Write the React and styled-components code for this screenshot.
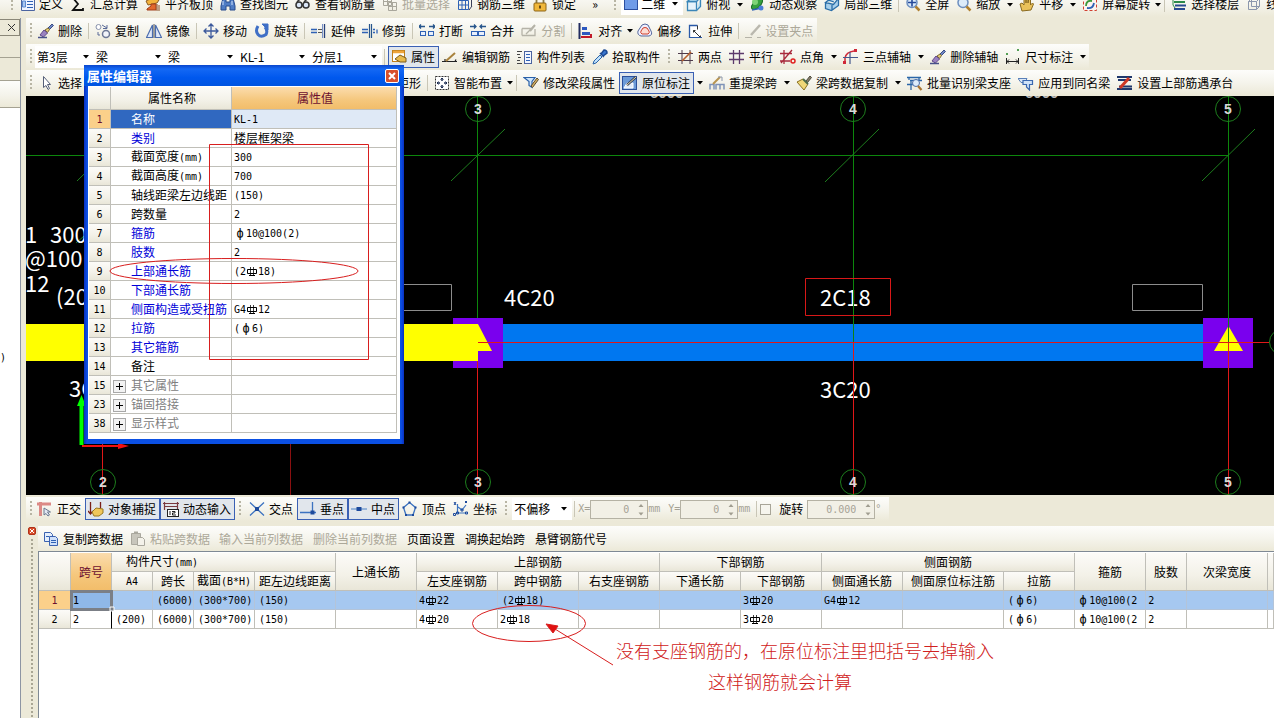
import React from "react";
import styled, { createGlobalStyle, css } from "styled-components";

const GlobalStyle = createGlobalStyle`
  * { box-sizing: border-box; }
  body {
    margin: 0;
    background: #fff;
    color: #000;
    font: 12px/16px "Noto Sans CJK SC", sans-serif;
    overflow: hidden;
  }
  button, input, select { font: inherit; color: inherit; margin: 0; }
`;

/* ---------- text helpers ---------- */

const Latin = styled.span`
  font-family: "DejaVu Sans Mono", monospace;
  font-size: 10px;
`;
const Wide = styled.span`
  display: inline-block;
  width: 12px;
  font-family: "DejaVu Sans Mono", monospace;
  font-size: 12px;
  line-height: 12px;
  text-align: center;
`;
const GradeSvg = styled.svg`
  display: inline-block;
  width: 12px;
  height: 11px;
  vertical-align: -2px;
`;
const Grade3 = () => (
  <GradeSvg viewBox="0 0 12 11" role="img" aria-label="三级钢" fill="none" stroke="currentColor">
    <path d="M1.500 3.500h9v4h-9zM3 9.500h6" />
    <path d="M4.500 1v8M7.500 1v8" strokeOpacity="0.750" />
  </GradeSvg>
);

/* "#" stands for the grade 3 rebar sign, "ф" is set in a full-width cell */
const Mixed = ({ children }) =>
  String(children)
    .split(/(#|ф|[\x20-\x22\x24-\x7e]+)/)
    .filter(Boolean)
    .map((run, i) => {
      if (run === "#") return <Grade3 key={i} />;
      if (run === "ф") return <Wide key={i}>ф</Wide>;
      if (/^[\x20-\x7e]+$/.test(run)) return <Latin key={i}>{run}</Latin>;
      return <React.Fragment key={i}>{run}</React.Fragment>;
    });

/* ---------- icons ---------- */

const B = "#2f62b5";
const P = ({ d, c = B, w = 1, f = "none" }) => <path d={d} stroke={c} strokeWidth={w} fill={f} />;
const brush = (
  <>
    <P d="M10 5l4-4 1.500 1.500-4 4z" c="#3c4f86" f="#6f86c4" />
    <P d="M7 7l3-2 1.500 1.500-2 3z" c="#7c6a30" f="#e0c878" />
    <P d="M2 12l4-5 3.500 3-4 4z" c="#60488a" f="#9a82c0" />
    <P d="M0 14.500h9" c="#48518a" w="1.500" />
  </>
);
const glass = (
  <>
    <circle cx="7" cy="6.500" r="5" fill="#dcebfa" stroke="#6d8fc0" strokeWidth="1.500" />
    <P d="M10.500 10.500l4 4" c="#b08030" w="2.500" />
  </>
);
const ICONS = {
  define: <><P d="M2.500 1.500h13v13h-13z" c="#4b64a0" f="#eef3ff" /><P d="M8 5.500h6M8 8.500h6M8 11.500h6" /><P d="M3.500 5h3v6h-3z" c="#5b8ad0" f="#a9c5ee" /></>,
  sum: <P d="M13 4V2H3l5 6-5 6h10v-2" c="#111" w="1.800" />,
  slab: <><P d="M1 5l6-3 7 2-2 3-9 2z" c="#8a5a20" f="#f3b33c" /><P d="M2 13l4-3v-2h5v6H2z" c="#a03c18" f="#e2682c" /><P d="M12 8v7M14 9v6" c="#8a4a20" /></>,
  find: <><P d="M3 2h3v4h4V2h3l2 8v4h-5v-4H6v4H1v-4z" c="#274a8c" f="#4f7cc4" /><P d="M3 5v4M12 5v4" c="#cfe0fb" /></>,
  view: <><circle cx="4" cy="9" r="3" fill="#dbe7f8" stroke="#333" strokeWidth="1.500" /><circle cx="11" cy="9" r="3" fill="#dbe7f8" stroke="#333" strokeWidth="1.500" /><P d="M7 9h1M2 6l3-3M9 6l4-4" c="#333" w="1.500" /></>,
  batch: <><P d="M1.500 1.500h8v8h-8zM1 5.500h8M5.500 2v8" c="#a9a79c" /><P d="M6.500 6.500h8v8h-8zM7 10.500h8M10.500 7v8" c="#a9a79c" /></>,
  bar3d: <><P d="M1.500 4.500h10v9h-10zM5 4v10M8.500 4v10M1 9h10" /><P d="M4.500 1.500h10v9M12 4l3-3M12 14l3-4" c="#3a3f58" /></>,
  lock: <><P d="M4.500 7V4q3.500-4 7 0v3" c="#8a7a48" w="1.800" /><rect x="2" y="7" width="12" height="8" rx="1" fill="#f0b73a" stroke="#8d6516" /><P d="M8 9.500v3" c="#6b4a10" w="2" /></>,
  square: <rect x="1.500" y="0.500" width="13" height="13" fill="#6f9be8" stroke="#2b4fa0" />,
  cube: <><P d="M1.500 5.500h9v9h-9z" f="#e6f3fb" c="#3b86b8" w="1.300" /><P d="M1.500 5.500l4-4h9l-4 4zM10.500 14.500l4-4v-9" c="#3b86b8" f="#bfe3f4" w="1.300" /></>,
  orbit: <><ellipse cx="8" cy="8" rx="7" ry="3.500" transform="rotate(-45 8 8)" fill="#36a03e" stroke="#1c6c28" /><circle cx="6" cy="6" r="3" fill="#7fd377" /><P d="M3 14l10-2" c={B} w="1.500" /><circle cx="12" cy="12" r="2.500" fill="#4b7ed8" /></>,
  part3d: <><P d="M1.500 6.500l5-4 7 1-4 5zM1.500 6.500v6l6 2 7-5v-6M8 8v6M4 4l6 2" c="#2b6ea8" f="#a8d0ec" w="1.300" /></>,
  fit: <>{glass}<P d="M7 2.500v8M3 6.500h8" c="#274a9a" w="1.600" /></>,
  zoom: glass,
  hand: <P d="M3 15l-2-7 2-1 2 2V3l2-1v5-6h2v6l1-5 1.500 1v6l2-2 1 1-2.500 6z" c="#8a6a20" f="#e9c15a" />,
  spin: <><rect x="1.500" y="1.500" width="13" height="13" fill="#fdf3ee" stroke="#d04030" strokeDasharray="3 2" /><P d="M4 10q0-6 6-5" c="#3c9a3c" w="1.800" /><P d="M5 12q6 1 7-5" c={B} w="1.800" /></>,
  floors: <><P d="M4 3l10-1M3 6h11" c="#2c8a4a" w="2" /><P d="M4 9.500h11M3 13h11" c="#284a90" w="2" /><P d="M2 1v8l2 3" c="#2c8a4a" /></>,
  wire: <><P d="M2.500 5.500h8v8h-8zM5.500 2.500h8v8h-8z" c="#8c97ad" /><P d="M2.500 5.500l3-3M10.500 5.500l3-3M10.500 13.500l3-3" c="#8c97ad" /></>,
  erase: brush,
  copy2: <><circle cx="3.500" cy="4" r="2.500" fill="#fff" stroke="#8791ab" /><circle cx="11" cy="11" r="3.500" fill="#f2f4fa" stroke="#6e7896" strokeWidth="1.500" /><P d="M7 2l5 3M12 2v3.500H8M3 9v3h2" c="#5a6a98" /></>,
  mirror: <><P d="M6.500 2v12.500h-6zM9.500 2v12.500h6z" c="#4a6cae" f="#dfe8f8" w="1.200" /><P d="M8 1v14" c="#555" /></>,
  move: <P d="M8 1v14M1 8h14M5.500 3.500L8 1l2.500 2.500M5.500 12.500L8 15l2.500-2.500M3.500 5.500L1 8l2.500 2.500M12.500 5.500L15 8l-2.500 2.500" c="#3d5a9c" w="1.300" />,
  rotate: <><P d="M4 3Q1 8 4 11.500t8 0q2-4-1-7.500" c="#3f6fc6" w="3" /><P d="M8 1h6v6z" c="#3f6fc6" f="#3f6fc6" /></>,
  extend: <><P d="M0 6.500h6M0 9.500h6" w="1.300" /><P d="M7 6.500h4M7 9.500h4" c="#555" /><P d="M13.500 1v14" c="#27407c" w="1.300" /><P d="M11.500 1v14" c="#7a92c8" /></>,
  trim: <><P d="M0 6.500h6M0 9.500h6M11 6.500h2M11 9.500h2M15 6.500v4" w="1.300" /><P d="M7.500 1v14M9.500 1v14" c="#27558c" w="1.200" /></>,
  brk: <><P d="M0 3.500h6M10 3.500h6M2 1.500L0 3.500l2 2M14 1.500l2 2-2 2" c="#27558c" w="1.300" /><rect x="1.500" y="8.500" width="5" height="4" fill="#e8effc" stroke={B} /><rect x="9.500" y="8.500" width="5" height="4" fill="#e8effc" stroke={B} /></>,
  join: <><P d="M0 3.500h6M10 3.500h6M4 1.500l2 2-2 2M12 1.500l-2 2 2 2" c="#27558c" w="1.300" /><rect x="1.500" y="8.500" width="6" height="4" fill="#e8effc" stroke={B} /><rect x="8.500" y="8.500" width="6" height="4" fill="#e8effc" stroke={B} /></>,
  split: <><P d="M1 5.500h9M1 12.500h13V6M1 5.500v7M5 11l8-8" c="#b5b3a8" w="1.300" /><P d="M9 8l5-6" c="#b5b3a8" w="2" /></>,
  align: <><P d="M1.500 0v16" c="#222c60" w="2" /><rect x="4" y="4" width="5" height="3" fill="#2d58c0" /><rect x="4" y="9" width="8" height="3" fill="#2d58c0" /><P d="M3 14h10v-3" c="#c01828" w="2" /></>,
  offset: <><P d="M4 13q-4-1-3-5l4-6q3-2 6 0l3 6q2 4-2 5z" c="#54689c" f="#eef" /><P d="M5 11q-2-1-1-3l2-3q2-1 4 0l2 3q1 2-1 3z" c="#d0402c" f="#fbdcd4" /></>,
  stretch: <><P d="M1.500 2.500h9l4 12h-13z" c="none" f="#fff" /><P d="M1.500 15V2.500h8" c="#2a5aa8" w="1.300" /><P d="M9.500 2.500v4M5.500 7.500l7 7M7.500 7.500h-2v2M12.500 12.500v2h-2" c="#333" /><P d="M2 14.500h12" c="#2a5aa8" /></>,
  grip: <><P d="M0 14.500h7M12 14.500h4" c="#b5b3a8" /><P d="M6 12l9-10" c="#bab8ae" w="2.500" /></>,
  props: <><rect x="1.500" y="1.500" width="12" height="11" fill="#fff" stroke="#c0801c" /><P d="M2 3h11" c="#eea43a" w="2.500" /><P d="M4 10l5-4 6 3v4H9z" c="#7a5a1c" f="#e8b94a" /></>,
  editbar: <><P d="M0 12.500h15M3 10v3M13 12.500l1-2" c="#222" w="1.200" /><P d="M4 12l9-8" c="#a8823c" w="2" /></>,
  list: <><rect x="7.500" y="2.500" width="7" height="12" fill="#f2f6ff" stroke="#4b64a0" /><P d="M9 5.500h4M9 8.500h4M9 11.500h4" /><P d="M0 2.500h5M0 5.500h3M1 8.500h3M0 11.500h3M0 14.500h5" c="#444" /></>,
  pick: <><P d="M1 15l1-3 6-6 2 2-6 6z" c="#2a64a8" f="#bfe0fa" /><P d="M8 4l4 4M9 5l3-4q3 0 3 3l-4 3z" c="#1d4a94" f="#3b78d0" w="1.500" /></>,
  pts2: <><P d="M4 1v14M12 1v14M0 4.500h15M0 11.500h15" c="#4d3a4a" /><P d="M4 12l9-9" c="#b8602c" w="1.600" /></>,
  para: <P d="M4.500 1v14M10.500 1v14M0 4.500h15M0 10.500h15" c="#5c3a6c" w="1.300" />,
  ptang: <><P d="M4 1v14M0 4.500h12M0 12h10M1 14L12 1" c="#a82a3c" w="1.300" /><circle cx="13" cy="12" r="2" fill="none" stroke="#e02020" strokeWidth="1.500" /></>,
  arc3: <><P d="M2 14V9q1-6 9-7" c="#d02838" w="1.500" /><P d="M7 3v12M0 8.500h15" c="#43588c" w="1.200" /><rect x="11" y="0" width="3" height="3" fill="#d02838" /><rect x="0" y="12" width="3" height="3" fill="#d02838" /></>,
  dim: <><rect x="1" y="4" width="2" height="2" fill="#55a055" /><rect x="12" y="0" width="2" height="2" fill="#55a055" /><P d="M1.500 9v6M13.500 9v6M2 12.500h11M4 10.500l-2 2 2 2M11 10.500l2 2-2 2" c="#222" /></>,
  arrow: <P d="M5.500 1.500v11l2.500-2 2 4 1.500-1-2-4h3z" c="#555f78" f="#fff" />,
  smart: <><rect x="1.500" y="1.500" width="13" height="13" fill="#fff" stroke="#333" strokeDasharray="2 1" /><P d="M8 3v3M8 10v3M3 8h3M10 8h3" c="#1c2c50" w="1.500" /><P d="M6.500 4.500L8 3l1.500 1.500M6.500 11.500L8 13l1.500-1.500M4.500 6.500L3 8l1.500 1.500M11.500 6.500L13 8l-1.500 1.500" c="#1c2c50" /></>,
  modify: <><P d="M1 2.500h11l-3 4v6l-3-2V6.500z" c="#2a60a8" f="#cfe6fb" w="1.200" /><P d="M8 11l6-8 1.500 1.500-6 8z" c="#5a4a30" f="#d4b060" /></>,
  insitu: <><rect x="0.500" y="1.500" width="14" height="13" fill="#6c9ad8" stroke="#2b4f9a" /><P d="M2 13l3-5h6v5z" c="#fff" f="#dfeafa" /><P d="M5 10l9-8" c="#33415e" w="2.500" /><P d="M5 10l9-8" c="#e9d8a0" /></>,
  span: <><P d="M1 14.500V9.500h4v5M7 14.500V9.500h4v5M11 9.500h4v5" c="#7f93b8" w="1.500" /><P d="M4 9l7-7" c="#b89450" w="2" /><P d="M9 2h4v4" c="#8d97aa" /></>,
  broom: <><P d="M10 6l4-5 1.500 1.500-4 5z" c="#4d4a40" f="#88806a" /><P d="M1 7l6-3 5 5-4 6z" c="#8a7020" f="#f0d878" /><P d="M7 4l5 5" c="#4d6c4a" w="2" /></>,
  detect: <><P d="M0 2.500h14M3 5.500h12M2 2v3M12 2v3M0 9.500h6M4 6v9" c="#2a66a8" w="1.300" /><circle cx="9" cy="8" r="3.500" fill="#dcecfb" stroke="#4a6ca8" /><P d="M11 11l3.500 4" c="#a87430" w="2.200" /></>,
  apply: <><P d="M0 3.500h9l-2 4H3z" c="#5a80b8" f="#dce9f8" /><P d="M5 5.500h9.500v4h-3v5.500l-3-3v-2.500H5z" c="#3a68b0" f="#cfe2f8" w="1.200" /></>,
  cap: <><P d="M0 2h15M0 14h15M1 5h13M2 11.500h13" c="#20386c" w="2" /><P d="M3 13L12 3" c="#d03824" w="3" /></>,
  ortho: <><P d="M0 3h14M3.500 1v14" c="#dc8a86" w="3" /><P d="M7 7v7l2-1.500 2 2.500 1.500-1-2-3h3z" c="#6a7890" f="#e4eaf4" /></>,
  snap: <><P d="M2.500 1v12M0 10l2.500 3L5 10M12.500 1v8" c="#7a2018" w="1.300" /><P d="M4 11l4-4 7 1v4l-4 3H6z" c="#9a7820" f="#f1c75a" /></>,
  dyn: <><P d="M0 2.500h16M1.500 1v8M14.500 1v8M1 5.500h14" c="#7a3a40" w="1.200" /><rect x="4.500" y="8.500" width="11" height="7" fill="#fff" stroke="#222" /><P d="M7 10v4M9 10.500h3v1.500H9.500v2H13" c="#222" /></>,
  cross: <><P d="M1 1.500l14 13M15 1.500l-14 13" c="#3b72c0" w="1.300" /><rect x="6" y="6" width="4" height="4" fill="#1d4a9c" /></>,
  perp: <><P d="M0 11.500h16M12.500 1v10" c="#3b72c0" w="1.300" /><rect x="10.500" y="9.500" width="4" height="4" fill="#1d4a9c" /></>,
  mid: <><P d="M0 8h16" c="#6f9ad0" w="1.300" /><rect x="5.500" y="6" width="5" height="4" fill="#1d4a9c" /></>,
  vertex: <><P d="M7.500 1.500l6 5-2.500 7.500H4L1.500 6.500z" c="#3b72c0" w="1.300" /><P d="M6.500 1.500h2M0.500 6.500h2M12.500 6.500h2M3 14h2M10 14h2" c="#1d4a9c" w="2" /></>,
  coord: <><P d="M4.500 3v9h9M5 6l4 3 4-5" c="#3b72c0" w="1.200" /><P d="M1 1l2 3M3 1L1 4M12 0l2 2M14 0l-2 2M0.500 12.500h2v2h-2zM3.500 11h2v2h-2zM8 8h2v2H8zM12.500 11h2v2h-2z" c="#1d4a9c" /></>,
  copy: <><P d="M1.500 1.500h6l2 2v7h-8z" c="#3b62b0" f="#e4eefc" /><P d="M6.500 5.500h6l2 2v7h-8z" c="#3b62b0" f="#cfe0fa" /><P d="M8 9.500h5M8 11.500h5M3 5.500h3" /></>,
  paste: <><P d="M1.500 2.500h9v11h-9z" c="#aaa89e" f="#c8c6bc" /><P d="M7.500 6.500h5l2 2v6h-7z" c="#aaa89e" f="#f4f2ea" /><P d="M4 1.500h4" c="#aaa89e" w="2" /></>,
};
const IconSvg = styled.svg`
  flex: none;
  width: 16px;
  height: 16px;
`;
const Icon = ({ name }) => <IconSvg viewBox="0 0 16 16" aria-hidden="true">{ICONS[name]}</IconSvg>;

/* ---------- toolbars ---------- */

const strip = "linear-gradient(#fdfdfb, #f5f4ec 50%, #ece9d8)";

const ToolRow = styled.div`
  display: flex;
  height: 26px;
  padding-bottom: 1px;
  background: #ece9d8;
`;
const TopRow = styled(ToolRow)`
  height: 27px;
  margin-top: -9px;
`;
const Strip = styled.div`
  display: flex;
  align-items: center;
  flex: ${(p) => (p.$grow ? "1" : "none")};
  padding-right: ${(p) => (p.$end ? "4px" : "0")};
  background: ${strip};
  white-space: nowrap;
`;
const ToolButton = styled.button`
  display: flex;
  flex: none;
  align-items: center;
  gap: 4px;
  height: 22px;
  padding: ${(p) => (p.$plain ? "0 5px" : "0 4px 0 3px")};
  border: 0;
  background: ${(p) => (p.$active ? "#e1e6ec" : "none")};
  box-shadow: ${(p) => (p.$active ? "inset 0 0 0 1px #3a60b4" : "none")};
  color: ${(p) => (p.disabled ? "#aca899" : "#000")};
  line-height: 16px;
  white-space: nowrap;
`;
const CaretButton = styled.button`
  flex: none;
  width: ${(p) => (p.$near ? "8px" : "12px")};
  height: 22px;
  padding: 0;
  border: 0;
  background: none;
  line-height: 0;
`;
const Sep = styled.span`
  flex: none;
  width: 4px;
  height: 16px;
  margin-left: 2px;
  border-left: 1px solid #c9c6b6;
`;
const Grip = styled.span`
  flex: none;
  width: ${(p) => (p.$w ? p.$w : 11)}px;
  height: 16px;
  background: radial-gradient(circle at 1px 1px, #b8b5a4 1px, transparent 1px) 4px 0 / 12px 4px repeat-y;
`;
const Gap = styled.span`
  flex: none;
  width: ${(p) => p.$w}px;
  text-align: center;
`;
const Caret = () => (
  <svg width="6" height="4" viewBox="0 0 6 4" aria-hidden="true"><path d="M0 0h6L3 3.500z" fill="#000" /></svg>
);
const Tool = ({ icon, label, active, disabled, caret }) => (
  <>
    <ToolButton type="button" $active={active} disabled={disabled}>
      <Icon name={icon} />
      {label}
    </ToolButton>
    {caret && (
      <CaretButton type="button" $near={caret === "near"} aria-label={label + "选项"}>
        <Caret />
      </CaretButton>
    )}
  </>
);
const ComboBox = styled.span`
  display: flex;
  flex: none;
  align-items: center;
  gap: 2px;
  width: ${(p) => p.$w}px;
  height: 22px;
  padding-right: 5px;
  padding-left: 2px;
  background: #fff;
  select {
    flex: 1;
    min-width: 0;
    padding: 0;
    border: 0;
    appearance: none;
    background: none;
  }
`;
const Combo = ({ w, value, label, icon }) => (
  <ComboBox $w={w}>
    {icon && <Icon name={icon} />}
    <select aria-label={label} defaultValue={value}><option>{value}</option></select>
    <Caret />
  </ComboBox>
);

/* ---------- frame ---------- */

const Page = styled.div`
  position: relative;
  display: flex;
  flex-direction: column;
  height: 100vh;
  overflow: hidden;
  background: #ece9d8;
`;
const Body = styled.div`
  display: flex;
  flex: 1;
  min-height: 0;
`;
const Side = styled.aside`
  display: flex;
  flex: none;
  flex-direction: column;
  width: 21px;
  margin-right: 5px;
  border-right: 1px solid #8d95a3;
  overflow: hidden;
`;
const SideHead = styled.div`
  display: flex;
  justify-content: flex-end;
  height: 17px;
  margin-top: 1px;
  border: 1px solid #8a8778;
  border-left: 0;
  button {
    width: 15px;
    padding: 0;
    border: 0;
    background: none;
    line-height: 0;
  }
`;
const SideTab = styled.div`
  height: ${(p) => p.$h}px;
  border-bottom: 1px solid #a5a292;
  background: ${(p) => (p.$light ? strip : "none")};
`;
const SideTree = styled.div`
  flex: 1;
  padding-top: 240px;
  background: #fff;
`;
const Main = styled.main`
  display: flex;
  flex: 1;
  flex-direction: column;
  min-width: 0;
`;

/* ---------- drawing area ---------- */

const Drawing = styled.svg`
  display: block;
  flex: none;
  width: 100%;
  height: 399px;
  background: #000;
  fill: none;
  text {
    fill: #fff;
    font: 22px "Noto Sans CJK SC", sans-serif;
  }
  .axis { font: bold 14px "Liberation Sans", sans-serif; fill: #d8d8d8; text-anchor: middle; }
  .span { font: bold 15px "Liberation Sans", sans-serif; fill: #b8b8b8; }
`;
const Bubble = ({ x, y, n }) => (
  <>
    <circle cx={x} cy={y} r="12.500" stroke="#1d7d1d" />
    <text className="axis" x={x} y={y + 5}>{n}</text>
  </>
);
const Canvas = () => (
  <Drawing role="img" aria-label="梁平面图">
    <g transform="translate(-26 -96)">
      <path d="M26 155.500H1229M477.500 96V318M853.500 96V324M1228.500 96V318" stroke="#0c860c" />
      <path d="M77 181l53-52M451 181l54-52M825 182l54-53M1202 181l53-52M76 243l8-7" stroke="#1d7d1d" />
      <text className="span" x="650" y="98">6000</text>
      <text className="span" x="1025" y="98">6000</text>
      <path d="M478 324h725v37H478z" fill="#0077f0" />
      <path d="M453 318h50v50h-50zM1203 318h50v50h-50z" fill="#7a00ee" />
      <path d="M26 324h452l14 27h-14v10H26zM1228.500 326l14.500 25h-29z" fill="#ff0" />
      <path d="M853.500 324v18M1228.500 318v24" stroke="#118011" />
      <path d="M380 284.500h71.500v26H380M1132.500 284.500h70v26h-70z" stroke="#8c8c8c" />
      <text x="504" y="306">4C20</text>
      <text x="820" y="306">2C18</text>
      <text x="820" y="398">3C20</text>
      <text x="25" y="243">1</text>
      <text x="50" y="243">300</text>
      <text x="25" y="267">@100(</text>
      <text x="25" y="292">12</text>
      <text x="56" y="305">(20</text>
      <text x="69" y="397">3C</text>
      <path d="M478 342.500h791M477.500 361v134M853.500 342v153M1228.500 342v153M102.500 440v55" stroke="#e01818" />
      <path d="M290.500 440v55" stroke="#8a1010" />
      <path d="M853.500 278v37" stroke="#0c860c" />
      <Bubble x={478} y={109} n="3" />
      <Bubble x={853} y={109} n="4" />
      <Bubble x={1228} y={109} n="5" />
      <Bubble x={103} y={482} n="2" />
      <Bubble x={478} y={482} n="3" />
      <Bubble x={853} y={482} n="4" />
      <Bubble x={1228} y={482} n="5" />
      <circle cx="1282" cy="342" r="12.500" stroke="#1d7d1d" />
      <path d="M81.500 445v-42" stroke="#0f0" strokeWidth="4" />
      <path d="M77 406l4.500-11 4.500 11z" fill="#0f0" />
      <path d="M82 446h38" stroke="#f01010" strokeWidth="2" />
      <path d="M118 443l11 3-11 3z" fill="#f01010" />
      <path d="M805.500 278.500h85v37h-85z" stroke="#d81818" />
    </g>
  </Drawing>
);

/* ---------- property dialog ---------- */

const Dialog = styled.section`
  position: absolute;
  top: 65px;
  left: 84px;
  width: 320px;
  padding: 0 4px 5px;
  background: linear-gradient(90deg, #0a2fbf, #0b50e4 3px, #0b50e4 317px, #0a2fbf);
`;
const DialogTitle = styled.header`
  display: flex;
  align-items: center;
  justify-content: space-between;
  height: 21px;
  margin: 0 -4px;
  padding: 0 5px 0 3px;
  background: linear-gradient(#0a46cc, #1468f4 4px, #0058ee 60%, #0054e0);
  h2 {
    margin: 0;
    color: #fff;
    font-size: 13px;
    line-height: 20px;
  }
`;
const CloseButton = styled.button`
  width: 14px;
  height: 14px;
  padding: 0;
  border: 1px solid #fff;
  border-radius: 2px;
  background: #d9502c;
  line-height: 0;
`;
const cell = css`
  height: 19px;
  padding: 0 0 0 2px;
  border-right: 1px solid #c0bfb8;
  border-bottom: 1px solid #c0bfb8;
  line-height: 16px;
  white-space: nowrap;
  overflow: hidden;
  font-weight: normal;
`;
const headFill = "linear-gradient(#fcfbf8, #f3f1e8 60%, #e9e6d8)";
const hotFill = "linear-gradient(#fbdcae, #f5c77c 60%, #f2bd6a)";
const PropTable = styled.table`
  width: 100%;
  border: solid #fff;
  border-width: 1px 3px 6px 1px;
  border-collapse: separate;
  border-spacing: 0;
  table-layout: fixed;
  background: #fff;
  th, td { ${cell} }
  thead th {
    height: 23px;
    background: ${headFill};
    text-align: center;
  }
  thead th:last-child { background: ${hotFill}; color: #6c1030; }
  tbody th { padding: 0; background: ${headFill}; text-align: center; }
  tbody tr:first-child th { background: #fbd08a; color: #6c1030; }
  tbody tr:first-child td { background: #dfe9f6; }
  tbody tr:first-child td:nth-child(2) { background: #3068c0; }
`;
const NameCell = styled.td`
  && { padding-left: ${(p) => (p.$group ? "2px" : "20px")}; }
  color: ${(p) => p.$color};
  button {
    width: 13px;
    height: 13px;
    margin-right: 5px;
    padding: 0;
    border: 1px solid #a8a8a8;
    background: #f2f2f2;
    color: #000;
    line-height: 0;
    vertical-align: middle;
  }
`;
const blue = "#0000d8";
const PROPS = [
  [1, "名称", "KL-1", "#fff"],
  [2, "类别", "楼层框架梁", blue],
  [3, "截面宽度(mm)", "300", "#000"],
  [4, "截面高度(mm)", "700", "#000"],
  [5, "轴线距梁左边线距", "(150)", "#000"],
  [6, "跨数量", "2", "#000"],
  [7, "箍筋", "ф10@100(2)", blue],
  [8, "肢数", "2", blue],
  [9, "上部通长筋", "(2#18)", blue],
  [10, "下部通长筋", "", blue],
  [11, "侧面构造或受扭筋", "G4#12", blue],
  [12, "拉筋", "(ф6)", blue],
  [13, "其它箍筋", "", blue],
  [14, "备注", "", "#000"],
  [15, "其它属性", "", "#808080", true],
  [23, "锚固搭接", "", "#808080", true],
  [38, "显示样式", "", "#808080", true],
];
const PropertyDialog = () => (
  <Dialog aria-label="属性编辑器">
    <DialogTitle>
      <h2>属性编辑器</h2>
      <CloseButton type="button" aria-label="关闭">
        <svg width="8" height="8" viewBox="0 0 8 8"><path d="M1 1l6 6M7 1l-6 6" stroke="#fff" strokeWidth="2" /></svg>
      </CloseButton>
    </DialogTitle>
    <PropTable>
      <colgroup><col width="22" /><col width="121" /><col /></colgroup>
      <thead><tr><th /><th>属性名称</th><th>属性值</th></tr></thead>
      <tbody>
        {PROPS.map(([n, name, value, color, group]) => (
          <tr key={n}>
            <th><Mixed>{n}</Mixed></th>
            <NameCell $color={color} $group={group}>
              {group && (
                <button type="button" aria-label={"展开" + name}>
                  <svg width="9" height="9" viewBox="0 0 9 9"><path d="M1 4.500h7M4.500 1v7" stroke="#000" /></svg>
                </button>
              )}
              <Mixed>{name}</Mixed>
            </NameCell>
            <td><Mixed>{value}</Mixed></td>
          </tr>
        ))}
      </tbody>
    </PropTable>
  </Dialog>
);

/* ---------- status bar ---------- */

const StatusRow = styled(ToolRow)`
  height: 31px;
  padding: 2px 0 5px;
`;
const Field = styled.label`
  display: flex;
  flex: none;
  align-items: center;
  color: #a5a295;
`;
const NumBox = styled.span`
  display: flex;
  width: ${(p) => p.$w}px;
  height: 19px;
  border: 1px solid #b5b2a4;
  background: #f2f0e6;
  input {
    flex: 1;
    min-width: 0;
    padding: 0;
    border: 0;
    background: none;
    color: #a5a295;
    font: 10px "DejaVu Sans Mono", monospace;
    text-align: right;
  }
  svg { flex: none; margin: 1px 2px 0 8px; }
`;
const Num = ({ w, value, label }) => (
  <NumBox $w={w}>
    <input aria-label={label} defaultValue={value} disabled />
    <svg width="8" height="15" viewBox="0 0 8 15"><path d="M1.500 5h5L4 2zM1.500 10.500h5L4 13.500z" fill="#a09d90" /></svg>
  </NumBox>
);
const Check = styled.input`
  width: 11px;
  height: 11px;
  border: 1px solid #a8a598;
  background: #f6f5ee;
  appearance: none;
`;

/* ---------- span data table ---------- */

const DataPanel = styled.section`
  display: flex;
  flex: 1;
  min-height: 0;
`;
const DockBar = styled.div`
  display: flex;
  flex: none;
  flex-direction: column;
  align-items: center;
  gap: 4px;
  width: 12px;
  padding-top: 1px;
  &::after {
    content: "";
    flex: 1;
    width: 2px;
    background: repeating-linear-gradient(#a9a694 0 2px, transparent 2px 4px);
  }
`;
const DockClose = styled(CloseButton)`
  width: 8px;
  height: 8px;
  border-color: #b03018;
`;
const DataBody = styled.div`
  display: flex;
  flex: 1;
  flex-direction: column;
  min-width: 0;
`;
const DataTools = styled.div`
  display: flex;
  flex: none;
  align-items: center;
  height: 25px;
  padding-left: 2px;
  background: ${strip};
`;
const Sheet = styled.div`
  position: relative;
  flex: 1;
  padding-top: 1px;
  border-top: 1px solid #7f8994;
  border-left: 1px solid #7f8994;
  background: #fff;
  overflow: hidden;
`;
const SpanTable = styled.table`
  width: 100%;
  min-width: 1235px;
  border-collapse: separate;
  border-spacing: 0;
  table-layout: fixed;
  th, td { ${cell} }
  thead th {
    padding: 0;
    background: ${headFill};
    text-align: center;
  }
  thead th.left { padding-left: 14px; text-align: left; }
  thead th.hot { background: ${hotFill}; color: #6c1030; }
  tbody th { padding: 0; text-align: center; background: ${headFill}; }
  tbody tr:first-child td { background: #a6c8f0; border-color: #b4c4d8; }
  tbody tr:first-child th { background: #fbd08a; color: #6c1030; }
  tbody td.inset { padding-left: 4px; }
  tbody tr:first-child td.picked {
    background: #8fb8e8;
    outline: 3px solid #7b7f86;
    outline-offset: -2px;
  }
  tbody td.edge { border-right-color: #000; }
`;
const Note = styled.p`
  position: absolute;
  top: ${(p) => p.$top}px;
  left: ${(p) => p.$left}px;
  margin: 0;
  color: #d02020;
  font-size: 18px;
  font-weight: 300;
  line-height: 28px;
  white-space: nowrap;
`;
const COLS = [32, 41, 41, 41, 61, 81, 81, 81, 81, 81, 81, 81, 81, 101, 71, 71, 41, 81];
const SUB = ["A4", "跨长", "截面(B*H)", "距左边线距离", "左支座钢筋", "跨中钢筋", "右支座钢筋", "下通长筋", "下部钢筋", "侧面通长筋", "侧面原位标注筋", "拉筋"];
const ROWS = [
  ["1", "", "(6000)", "(300*700)", "(150)", "", "4#22", "(2#18)", "", "", "3#20", "G4#12", "", "(ф6)", "ф10@100(2", "2", "", ""],
  ["2", "(200)", "(6000)", "(300*700)", "(150)", "", "4#20", "2#18", "", "", "3#20", "", "", "(ф6)", "ф10@100(2", "2", "", ""],
];
const cellClass = (r, c, text) => {
  if (c === 0) return r === 0 ? "picked" : "edge";
  return text.startsWith("(") ? "inset" : undefined;
};
const SpanData = () => (
  <SpanTable>
    <colgroup>{COLS.map((w, i) => <col key={i} width={w} />)}<col /></colgroup>
    <thead>
      <tr>
        <th rowSpan={2} />
        <th rowSpan={2} className="hot">跨号</th>
        <th colSpan={4} className="left"><Mixed>构件尺寸(mm)</Mixed></th>
        <th rowSpan={2}>上通长筋</th>
        <th colSpan={3}>上部钢筋</th>
        <th colSpan={2}>下部钢筋</th>
        <th colSpan={3}>侧面钢筋</th>
        <th rowSpan={2}>箍筋</th>
        <th rowSpan={2}>肢数</th>
        <th rowSpan={2}>次梁宽度</th>
        <th rowSpan={2} />
      </tr>
      <tr>{SUB.map((s) => <th key={s}><Mixed>{s}</Mixed></th>)}</tr>
    </thead>
    <tbody>
      {ROWS.map((row, r) => (
        <tr key={r}>
          <th><Mixed>{r + 1}</Mixed></th>
          {row.map((text, c) => <td key={c} className={cellClass(r, c, text)}><Mixed>{text}</Mixed></td>)}
        </tr>
      ))}
    </tbody>
  </SpanTable>
);

/* ---------- red mark-up over the whole window ---------- */

const Markup = styled.svg`
  position: absolute;
  inset: 0;
  width: 100%;
  height: 100%;
  pointer-events: none;
  fill: none;
  stroke: #d81e1e;
`;

export default function App() {
  return (
    <Page>
      <GlobalStyle />
      <TopRow>
        <Strip $grow>
          <Gap $w={7} /><Grip $w={9} />
          <Tool icon="define" label="定义" />
          <Tool icon="sum" label="汇总计算" />
          <Tool icon="slab" label="平齐板顶" />
          <Tool icon="find" label="查找图元" />
          <Tool icon="view" label="查看钢筋量" />
          <Tool icon="batch" label="批量选择" disabled />
          <Tool icon="bar3d" label="钢筋三维" />
          <Tool icon="lock" label="锁定" />
          <Gap $w={30}>»</Gap>
          <Grip />
          <Combo w={62} value="二维" label="视图" icon="square" />
          <Tool icon="cube" label="俯视" caret="far" />
          <Tool icon="orbit" label="动态观察" />
          <Tool icon="part3d" label="局部三维" />
          <Sep />
          <Tool icon="fit" label="全屏" />
          <Tool icon="zoom" label="缩放" caret="far" />
          <Tool icon="hand" label="平移" caret="far" />
          <Tool icon="spin" label="屏幕旋转" caret="near" />
          <Sep />
          <Tool icon="floors" label="选择楼层" />
          <Tool icon="wire" label="线框" />
        </Strip>
      </TopRow>
      <Body>
        <Side>
          <SideHead>
            <button type="button" aria-label="关闭面板">
              <svg width="9" height="9" viewBox="0 0 9 9"><path d="M1 1l7 7M8 1l-7 7" stroke="#333" /></svg>
            </button>
          </SideHead>
          <SideTab $h={22} />
          <SideTab $h={23} />
          <SideTab $h={27} $light />
          <SideTree><Latin>)</Latin></SideTree>
        </Side>
        <Main>
          <ToolRow>
            <Strip>
              <Grip $w={9} />
              <Tool icon="erase" label="删除" />
              <Sep />
              <Tool icon="copy2" label="复制" />
              <Tool icon="mirror" label="镜像" />
              <Sep />
              <Tool icon="move" label="移动" />
              <Tool icon="rotate" label="旋转" />
              <Sep />
              <Tool icon="extend" label="延伸" />
              <Tool icon="trim" label="修剪" />
              <Sep />
              <Tool icon="brk" label="打断" />
              <Tool icon="join" label="合并" />
              <Tool icon="split" label="分割" disabled />
              <Sep />
              <Tool icon="align" label="对齐" caret="near" />
              <Tool icon="offset" label="偏移" />
              <Tool icon="stretch" label="拉伸" />
              <Sep />
              <Tool icon="grip" label="设置夹点" disabled />
            </Strip>
          </ToolRow>
          <ToolRow>
            <Strip>
              <Grip $w={9} />
              <Combo w={59} value="第3层" label="楼层" />
              <Combo w={72} value="梁" label="构件类别" />
              <Combo w={72} value="梁" label="构件类型" />
              <Combo w={72} value="KL-1" label="构件" />
              <Combo w={72} value="分层1" label="分层" />
              <Sep />
              <Tool icon="props" label="属性" active />
              <Tool icon="editbar" label="编辑钢筋" />
              <Tool icon="list" label="构件列表" />
              <Tool icon="pick" label="拾取构件" />
              <Grip />
              <Tool icon="pts2" label="两点" />
              <Tool icon="para" label="平行" />
              <Tool icon="ptang" label="点角" caret="far" />
              <Tool icon="arc3" label="三点辅轴" caret="far" />
              <Tool icon="erase" label="删除辅轴" />
              <Tool icon="dim" label="尺寸标注" caret="far" />
            </Strip>
          </ToolRow>
          <ToolRow>
            <Strip $grow>
              <Grip $w={9} />
              <Tool icon="arrow" label="选择" />
              <Gap $w={288} />
              <Tool icon="smart" label="矩形" />
              <Sep />
              <Tool icon="smart" label="智能布置" caret="near" />
              <Sep />
              <Tool icon="modify" label="修改梁段属性" />
              <Tool icon="insitu" label="原位标注" active caret="far" />
              <Tool icon="span" label="重提梁跨" caret="far" />
              <Tool icon="broom" label="梁跨数据复制" caret="far" />
              <Tool icon="detect" label="批量识别梁支座" />
              <Tool icon="apply" label="应用到同名梁" />
              <Tool icon="cap" label="设置上部筋遇承台" />
            </Strip>
          </ToolRow>
          <Canvas />
          <StatusRow>
            <Strip $end>
              <Grip $w={8} />
              <Tool icon="ortho" label="正交" />
              <Tool icon="snap" label="对象捕捉" active />
              <Tool icon="dyn" label="动态输入" active />
              <Grip />
              <Tool icon="cross" label="交点" />
              <Tool icon="perp" label="垂点" active />
              <Tool icon="mid" label="中点" active />
              <Tool icon="vertex" label="顶点" />
              <Tool icon="coord" label="坐标" />
              <Grip />
              <Combo w={60} value="不偏移" label="偏移方式" />
              <Sep />
              <Field><Latin>X=</Latin><Num w={58} value="0" label="X" /><Latin>mm</Latin></Field>
              <Gap $w={8} />
              <Field><Latin>Y=</Latin><Num w={58} value="0" label="Y" /><Latin>mm</Latin></Field>
              <Gap $w={4} />
              <Sep />
              <Check type="checkbox" id="rotate" disabled />
              <Gap $w={8} />
              <label htmlFor="rotate">旋转</label>
              <Gap $w={4} />
              <Field><Num w={68} value="0.000" label="角度" /><Latin>°</Latin></Field>
              <Gap $w={4} />
            </Strip>
          </StatusRow>
          <DataPanel>
            <DockBar><DockClose type="button" aria-label="关闭"><svg width="6" height="6" viewBox="0 0 6 6"><path d="M1 1l4 4M5 1l-4 4" stroke="#fff" /></svg></DockClose></DockBar>
            <DataBody>
              <DataTools>
                <Tool icon="copy" label="复制跨数据" />
                <Tool icon="paste" label="粘贴跨数据" disabled />
                <ToolButton type="button" $plain disabled>输入当前列数据</ToolButton>
                <ToolButton type="button" $plain disabled>删除当前列数据</ToolButton>
                <ToolButton type="button" $plain>页面设置</ToolButton>
                <ToolButton type="button" $plain>调换起始跨</ToolButton>
                <ToolButton type="button" $plain>悬臂钢筋代号</ToolButton>
              </DataTools>
              <Sheet>
                <SpanData />
                <Note $top={84} $left={577}>没有支座钢筋的，在原位标注里把括号去掉输入</Note>
                <Note $top={115} $left={669}>这样钢筋就会计算</Note>
              </Sheet>
            </DataBody>
          </DataPanel>
        </Main>
      </Body>
      <PropertyDialog />
      <Markup aria-hidden="true">
        <path d="M209.500 144.500h159v215h-159z" />
        <ellipse cx="234" cy="271" rx="124" ry="12.500" />
        <ellipse cx="529" cy="623.500" rx="56.500" ry="18" />
        <path d="M613 665l-58-36" />
        <path d="M546 624l12 2-5 7z" fill="#e01010" />
        <path d="M110 607h4v4h-4z" fill="#7b7f86" stroke="#fff" />
      </Markup>
    </Page>
  );
}
